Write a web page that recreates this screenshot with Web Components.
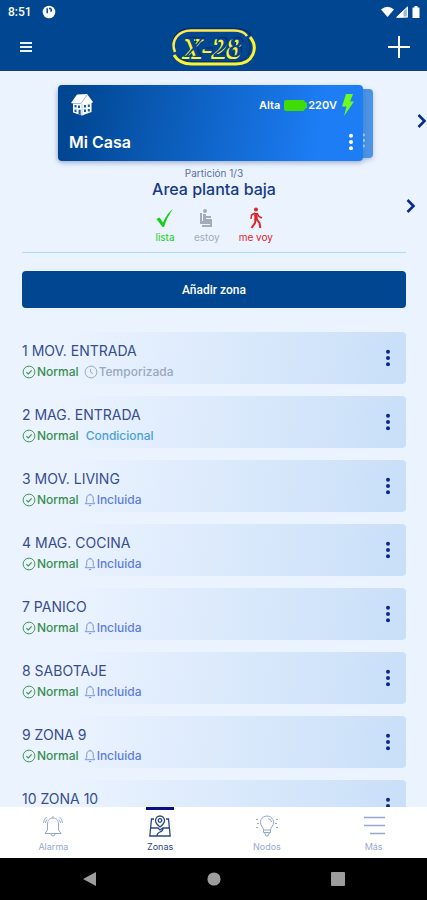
<!DOCTYPE html>
<html lang="es">
<head>
<meta charset="utf-8">
<meta name="viewport" content="width=device-width, initial-scale=1">
<title>X-28 · Zonas</title>
<style>
html, body { margin: 0; height: 100%; }
body { font-family: Inter, "Noto Sans", sans-serif; overflow: hidden; }
</style>
</head>
<body>
<x28-app></x28-app>
<script>
const RESET = `*{box-sizing:border-box}button{border:0;background:none;padding:0;margin:0;color:inherit;font:inherit;cursor:pointer;display:grid;place-items:center}a{color:inherit;text-decoration:none}svg{display:block}`;
function define(name, html) {
  customElements.define(name, class extends HTMLElement {
    connectedCallback() {
      if (this.shadowRoot) return;
      const t = document.createElement('template');
      t.innerHTML = `<style>${RESET}</style>` + (typeof html === 'function' ? html(this) : html);
      this.attachShadow({ mode: 'open' }).append(t.content.cloneNode(true));
    }
  });
}
const CHECK = `<svg width="14" height="14" viewBox="0 0 14 14" fill="none" stroke="#3f9a58" stroke-width="1"><circle cx="7" cy="7" r="5.9"/><path d="M4.4 7.2l1.9 1.7 3.4-3.6" stroke-width="1.2"/></svg>`;
const CLOCK = `<svg width="14" height="14" viewBox="0 0 14 14" fill="none" stroke="#9aa9bd" stroke-width="1"><circle cx="7" cy="7" r="5.9"/><path d="M6.6 3.8v3.4l2.2 1.4"/></svg>`;
const BELL = `<svg width="12" height="14" viewBox="0 0 12 14" fill="none" stroke="#7c93dc" stroke-width="1"><path d="M1.2 10.7h9.6L9.3 8.6V5.3C9.3 3.2 8 1.8 6 1.8S2.7 3.2 2.7 5.3v3.3zM4.8 12.6h2.4M6 .8v1"/></svg>`;

define('status-strip', `<style>
:host{display:flex;align-items:center;height:24px;padding:0 6px 0 8px;background:#004691;color:#fff;font:500 12px Roboto,sans-serif}
.badge{margin-left:10px;flex:1}.sys{display:flex;gap:2px}
</style>
<span>8:51</span>
<svg class="badge" width="14" height="14" viewBox="0 0 14 14" preserveAspectRatio="xMinYMid"><circle cx="7" cy="7" r="6.3" fill="#fff"/><path d="M5.2 3.2v5M7 3.6h1.600q1.600 1.500 0 3" stroke="#004691" stroke-width="1.5" fill="none"/></svg>
<span class="sys">
<svg width="13" height="12" viewBox="0 0 13 12"><path d="M0 3.4Q6.5-1.8 13 3.4L6.5 11z" fill="#fff"/></svg>
<svg width="13" height="12" viewBox="0 0 13 12"><path d="M0 11.5L12 0v11.5z" fill="#9cb9dc"/><path d="M0 11.5L7.5 4.3v7.2z" fill="#fff"/><path d="M1 11L11.4 1.2V11z" fill="none" stroke="#fff"/></svg>
<svg width="10" height="12" viewBox="0 0 10 12"><path d="M1.5 1.5h2V0h3v1.5h2V12h-7z" fill="#fff"/></svg>
</span>`);

define('brand-logo', `<style>
:host{display:grid;place-items:center;width:86px;height:40px}
svg,span{grid-area:1/1}
span{font:italic 700 29px/30px "Liberation Serif",serif;color:#004691;text-shadow:-1px 1px 0 #fff22f,-2px 1px 0 #fff22f,-2px 2px 0 #fff22f,-1px 2px 0 #fff22f,1px -1px 0 #072c70;white-space:nowrap}
</style>
<svg width="86" height="40" viewBox="0 0 86 40" fill="none"><path d="M2 20C1 9 8 1.500 20 1.500H64C72 1.500 77 4 80 8" stroke="#072c70" stroke-width="1.500"/><path d="M4 25C-1 13 8 3.500 20 3.500H63C70 3.500 74 6 76 9" stroke="#ffe94d" stroke-width="2.500"/><path d="M3 28C7 35 13 37 21 37H65C82 37 88 21 79 10" stroke="#fff22f" stroke-width="3"/><path d="M7 28C11 33 15 34.500 22 34.500H64C77 34.500 82 23 77 12" stroke="#072c70" stroke-width="1"/></svg>
<span>X-28</span>`);

define('top-bar', `<style>
:host{display:grid;grid-template-columns:1fr auto 1fr;align-items:center;height:47px;padding:0 17px;background:#004691;border-bottom:1px solid #183880}
.menu{justify-self:start;padding:0 3px}.plus{justify-self:end}
</style>
<button class="menu" aria-label="Menú"><svg width="12" height="24" viewBox="0 0 12 24" stroke="#e9f2ff" stroke-width="2"><path d="M0 8h12M0 12h12M0 16h12"/></svg></button>
<brand-logo></brand-logo>
<button class="plus" aria-label="Agregar"><svg width="22" height="24" viewBox="0 0 22 24" stroke="#fff" stroke-width="2"><path d="M0 12h22M11 1v22"/></svg></button>`);

define('chevron-button', `<style>:host{display:block}</style>
<button aria-label="Siguiente"><svg width="10" height="16" viewBox="0 0 10 16" fill="none" stroke="#0a2c8b" stroke-width="2.600"><path d="M1.500 2L7.500 8L1.500 14"/></svg></button>`);

define('dots-button', `<style>:host{display:block}</style>
<button aria-label="Opciones"><svg width="6" height="18" viewBox="0 0 6 18" fill="currentColor"><circle cx="3" cy="2.800" r="2"/><circle cx="3" cy="9" r="2"/><circle cx="3" cy="15.200" r="2"/></svg></button>`);

define('house-card', `<style>
:host{display:grid;grid-template-columns:58px 1fr 10px 54px;align-items:center;padding-top:14px}
.back{grid-area:1/2/2/4;height:69px;background:#4b93e4;border-radius:4px;box-shadow:0 2px 5px #6b86ac66;display:flex;justify-content:flex-end;align-items:flex-end;padding:0 7px 10px 0;color:#b9d6f7}
.back svg{width:5px;height:15px}
.card{grid-area:1/2/2/3;z-index:1;height:76px;border-radius:4px;background:linear-gradient(100deg,#004691 5%,#1c7df5 85%);box-shadow:0 2px 5px #4a6a9966;color:#fff;display:flex;flex-direction:column;justify-content:space-between;padding:8px 9px 9px 11px}
.row{display:flex;align-items:center;justify-content:space-between}
.power{display:flex;align-items:center;font-size:11px;font-weight:600;line-height:24px}
.power svg:first-of-type{margin:0 1px 0 4px}.power svg:last-of-type{margin-left:4px}
h1{margin:0;font-size:16px;line-height:20px;font-weight:600}
chevron-button{grid-area:1/4;justify-self:end;padding-bottom:4px}
</style>
<div class="back"><svg viewBox="0 0 5 15" fill="currentColor"><circle cx="2.500" cy="2" r="1.400"/><circle cx="2.500" cy="7.500" r="1.400"/><circle cx="2.500" cy="13" r="1.400"/></svg></div>
<div class="card">
<div class="row">
<svg width="26" height="24" viewBox="0 0 26 24"><path d="M2 10L8 1.500 18 1l6 8-1.500 1.200V19L13 22.500 4 19.500v-9z" fill="#fff"/><path d="M4 10.500h8L18 2" stroke="#7ba9dc" stroke-width=".8" fill="none"/><path d="M5.500 12h2v2.500h-2zM9 12.400h2v2.500H9zM5.500 16.400h2v2.500h-2zM9.500 16.800h2.200V22l-2.200-.7zM15 12h2v2.500h-2zM18.800 11.500h2V14h-2zM15 16.500h2V19h-2zM18.800 16h2v2.500h-2z" fill="#185aa9"/><path d="M13 11v11.500" stroke="#9fc0e6" stroke-width=".8"/></svg>
<span class="power">Alta<svg width="23" height="11" viewBox="0 0 23 11"><path d="M2 0h17q1.500 0 2 2l2 1.500v4L21 9q-.5 2-2 2H2Q0 11 0 9V2q0-2 2-2z" fill="#3fdc05"/></svg>220V<svg width="13" height="24" viewBox="0 0 13 24"><path d="M5 1h7L9 8.500h4L3 23l2.500-9.500H1z" fill="#70fb20"/></svg></span>
</div>
<div class="row"><h1>Mi Casa</h1><dots-button></dots-button></div>
</div>
<chevron-button></chevron-button>`);

define('partition-panel', `<style>
:host{display:grid;grid-template-columns:1fr;margin:0 21px 0 22px;border-bottom:1px solid #addbf5;padding:0 0 8px;color:#173a88;justify-items:center}
small{display:block;padding-top:5px;font-size:10px;line-height:14px;color:#56709f}
h2{margin:0;font-size:16px;line-height:18px;font-weight:500}
.head{grid-area:1/1;text-align:center}
.modes{grid-area:2/1;display:flex;gap:19px;margin-top:9px}
.modes button{font-size:10px;line-height:14px;gap:1px}
.ok{color:#16cf16}.stay{color:#a3abb8}.go{color:#e02328}
chevron-button{grid-area:1/1/3/2;justify-self:end;align-self:center;padding-top:6px;margin-right:-10px}
</style>
<div class="head"><small>Partición 1/3</small><h2>Area planta baja</h2></div>
<chevron-button></chevron-button>
<div class="modes">
<button class="ok"><svg width="20" height="22" viewBox="0 0 20 22"><path d="M1.500 12l3-1.500 3.500 5Q12 6 18 2q-6 8-9 18H7.500z" fill="currentColor"/></svg>lista</button>
<button class="stay"><svg width="20" height="22" viewBox="0 0 20 22" fill="currentColor"><circle cx="8" cy="4" r="2"/><path d="M3 6h2v8h10v6h-2v-3H3z"/><path d="M6 7h3v2h5v2H9v1h6v2H6zM5 18h8v2H5z"/></svg>estoy</button>
<button class="go"><svg width="20" height="22" viewBox="0 0 20 22" fill="none" stroke="currentColor"><circle cx="10" cy="2.500" r="2" fill="currentColor" stroke="none"/><path d="M10 6v7" stroke-width="3.400"/><path d="M9 6L5.500 8 5 12M11 6l2 3.500 3 1.500" stroke-width="1.500"/><path d="M9.500 12L9 16l-3.500 5M10.500 12l3 4 .8 5" stroke-width="2"/></svg>me voy</button>
</div>`);

define('zone-item', el => {
  const kind = el.getAttribute('state');
  const icon = kind === 'Temporizada' ? CLOCK : kind === 'Incluida' ? BELL : '';
  const color = kind === 'Temporizada' ? '#99a8bb' : kind === 'Incluida' ? '#5f7ddd' : '#4a9fdc';
  const status = kind ? `<p>${CHECK}<span class="n">Normal</span>${icon}<span class="s">${kind}</span></p>` : '';
  return `<style>
:host{display:flex;justify-content:space-between;align-items:flex-start;height:52px;flex-shrink:0;border-radius:4px;background:linear-gradient(100deg,#ebf3ff 12%,#dceafc 50%,#c8dff8);padding:10px 15px 0 0;color:#0b2790}
h3{margin:0;font-size:14px;line-height:18px;font-weight:400;color:#364d92}
p{margin:0;display:flex;align-items:center;font-size:12px;line-height:16px;padding-top:4px;font-weight:500}
dots-button{padding-top:7px}
.n{color:#378f4d;margin:0 5px 0 1px}.s{color:${color};margin-left:${icon ? 1 : 2}px}
</style><div><h3><slot></slot></h3>${status}</div><dots-button></dots-button>`;
});

define('tab-item', el => `<style>
:host{flex:1;display:block;color:${el.hasAttribute('active') ? '#294788' : '#94a9cf'}}
a{display:flex;flex-direction:column;align-items:center;height:51px;font-size:9px;line-height:12px}
a::before{content:"";width:28px;height:3px;background:${el.hasAttribute('active') ? '#070e87' : 'transparent'};margin-bottom:5px}
.l{padding-top:4px}
</style><a href="#"><slot name="icon"></slot><span class="l"><slot></slot></span></a>`);

define('system-nav', `<style>
:host{display:flex;justify-content:center;gap:110px;align-items:center;height:42px;background:#000;color:#9d9d9d}
</style>
<button aria-label="Atrás"><svg width="14" height="16" viewBox="0 0 14 16"><path d="M13 1v14L0 8z" fill="currentColor"/></svg></button>
<button aria-label="Inicio"><svg width="14" height="14"><circle cx="7" cy="7" r="6.600" fill="currentColor"/></svg></button>
<button aria-label="Recientes"><svg width="14" height="14"><rect width="14" height="14" rx="1" fill="currentColor"/></svg></button>`);

define('x28-app', `<style>
:host{display:flex;flex-direction:column;height:100vh;background:#ebf3ff}
main{flex:1;min-height:0;overflow-y:auto;scrollbar-width:none;display:flex;flex-direction:column}
house-card,partition-panel{flex-shrink:0}
.add{flex-shrink:0;height:37px;margin:18px 21px 24px 22px;border-radius:4px;background:#004691;color:#fff;font:500 12px Roboto,sans-serif}
.zones{display:flex;flex-direction:column;gap:12px;margin:0 21px 0 22px}
nav{display:flex;background:#fff}
</style>
<status-strip></status-strip><top-bar></top-bar>
<main>
<house-card></house-card>
<partition-panel></partition-panel>
<button class="add">Añadir zona</button>
<section class="zones">
<zone-item state="Temporizada">1 MOV. ENTRADA</zone-item>
<zone-item state="Condicional">2 MAG. ENTRADA</zone-item>
<zone-item state="Incluida">3 MOV. LIVING</zone-item>
<zone-item state="Incluida">4 MAG. COCINA</zone-item>
<zone-item state="Incluida">7 PANICO</zone-item>
<zone-item state="Incluida">8 SABOTAJE</zone-item>
<zone-item state="Incluida">9 ZONA 9</zone-item>
<zone-item>10 ZONA 10</zone-item>
</section>
</main>
<nav>
<tab-item>Alarma<svg slot="icon" width="22" height="22" viewBox="0 0 22 22" fill="none" stroke="currentColor"><path d="M3 18.500h16L16.500 15V9c0-3.500-2-6-5.500-6S5.500 5.500 5.500 9v6zM9 18.500q0 2.500 2 2.500t2-2.500M11 1v2M4.500 2Q1.500 4.500 1.500 8M17.500 2q3 2.500 3 6M5 4.500Q3.500 6 3.500 8M17 4.500q1.500 1.500 1.500 3.500"/></svg></tab-item>
<tab-item active>Zonas<svg slot="icon" width="22" height="22" viewBox="0 0 22 22" fill="none" stroke="currentColor" stroke-width="1.300"><path d="M5 4H2.500L.8 21h20.400L19.500 4H17M2 13h7l2 2 3-2h6M8 21q0-3 3-4t3-3.500"/><path d="M11 12Q6.500 8.500 6.500 5.500a4.500 4.500 0 0 1 9 0Q15.500 8.500 11 12z"/><circle cx="11" cy="5.500" r="1.800"/></svg></tab-item>
<tab-item>Nodos<svg slot="icon" width="22" height="22" viewBox="0 0 22 22" fill="none" stroke="currentColor"><path d="M7.500 15q0-2-1.500-3.500C2.500 7 5.500 1 11 1s8.500 6 5 10.500Q14.500 13 14.500 15zM7.500 15v2.500h7V15M8.500 17.500l1.500 3.500h2l1.500-3.500M12 3.500q3 .5 3.500 3.500"/><path d="M0 4.500h2M1 8.500h2M0 12.500h2M20 4.500h2M19 8.500h2M20 12.500h2"/></svg></tab-item>
<tab-item>Más<svg slot="icon" width="22" height="22" viewBox="0 0 22 22" fill="none" stroke="currentColor" stroke-width="1.500"><path d="M1 2.500h21M1 10.500h21M7 18.500h15"/></svg></tab-item>
</nav>
<system-nav></system-nav>`);
</script>
</body>
</html>
